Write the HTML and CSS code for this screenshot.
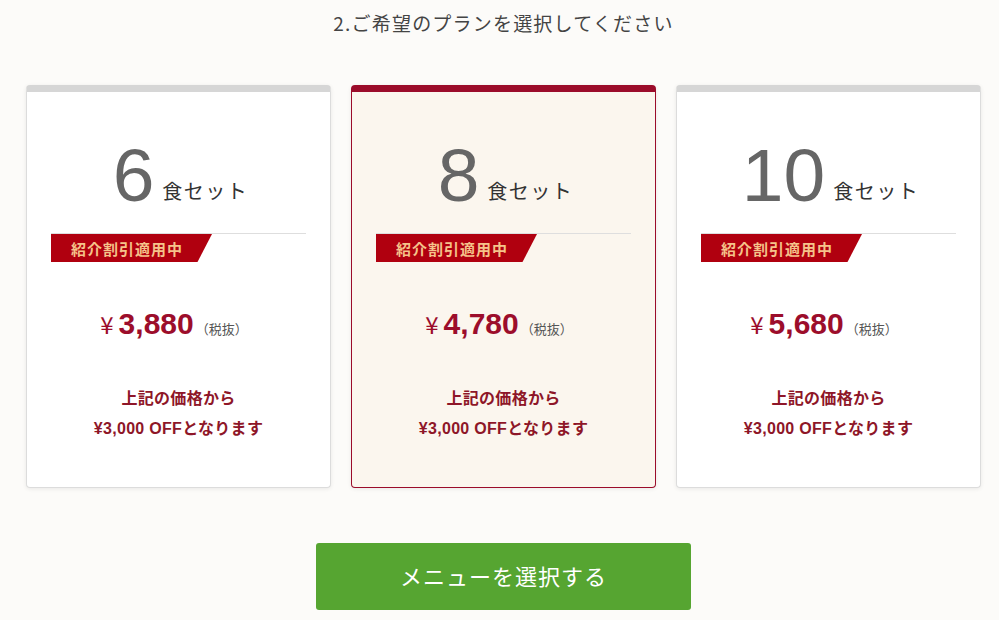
FILE: index.html
```html
<!DOCTYPE html>
<html lang="ja">
<head>
<meta charset="utf-8">
<link rel="stylesheet" href="styles.css">
</head>
<body>
<div class="wrap">
  <h2 class="title">2.ご希望のプランを選択してください</h2>
  <div class="plans">
    <div class="card">
      <div class="qty"><span class="num">6</span><span class="unit">食セット</span></div>
      <div class="badge-row"><span class="badge">紹介割引適用中</span></div>
      <div class="price"><span class="yen">¥</span><span class="amount">3,880</span><span class="tax">（税抜）</span></div>
      <p class="note">上記の価格から<br>¥3,000 OFFとなります</p>
    </div>
    <div class="card selected">
      <div class="qty"><span class="num">8</span><span class="unit">食セット</span></div>
      <div class="badge-row"><span class="badge">紹介割引適用中</span></div>
      <div class="price"><span class="yen">¥</span><span class="amount">4,780</span><span class="tax">（税抜）</span></div>
      <p class="note">上記の価格から<br>¥3,000 OFFとなります</p>
    </div>
    <div class="card">
      <div class="qty"><span class="num">10</span><span class="unit">食セット</span></div>
      <div class="badge-row"><span class="badge">紹介割引適用中</span></div>
      <div class="price"><span class="yen">¥</span><span class="amount">5,680</span><span class="tax">（税抜）</span></div>
      <p class="note">上記の価格から<br>¥3,000 OFFとなります</p>
    </div>
  </div>
  <div class="actions"><button class="btn">メニューを選択する</button></div>
</div>
</body>
</html>
```
FILE: styles.css
```css
* { box-sizing: border-box; }
html, body { margin: 0; padding: 0; }
body {
  background: #fcfbf9;
  font-family: "Liberation Sans", "Noto Sans CJK JP", sans-serif;
  color: #333;
}
.wrap {
  width: 955px;
  margin-left: 26px;
  padding-top: 11px;
}
.title {
  margin: 0;
  text-align: center;
  font-family: "Noto Sans CJK JP", sans-serif;
  font-weight: 400;
  font-size: 19px;
  line-height: 24px;
  letter-spacing: 1.2px;
  color: #444;
}
.plans {
  margin-top: 50px;
  display: grid;
  grid-template-columns: repeat(3, 1fr);
  gap: 20px;
}
.card {
  background: #fff;
  border: 1px solid #dcdcdc;
  border-top: 7px solid #d6d6d6;
  border-radius: 4px;
  box-shadow: 0 1px 4px rgba(0,0,0,0.08);
  padding: 46px 24px 0;
  height: 403px;
}
.card.selected {
  background: #fbf6ee;
  border-color: #9b0c2a;
}
.qty {
  display: flex;
  justify-content: center;
  align-items: baseline;
  height: 75px;
  padding-left: 4px;
}
.num {
  font-family: "Liberation Sans", Arial, sans-serif;
  font-size: 75px;
  line-height: 75px;
  color: #666;
}
.unit {
  margin-left: 8px;
  font-family: "Noto Sans CJK JP", sans-serif;
  font-size: 20px;
  letter-spacing: 1.5px;
  color: #333;
  position: relative;
  top: -2px;
}
.badge-row {
  margin-top: 20px;
  border-top: 1px solid #dedede;
  height: 29px;
}
.badge {
  display: flex;
  align-items: center;
  width: 161px;
  height: 28px;
  padding-left: 20px;
  background: #b0000f;
  clip-path: polygon(0 0, 100% 0, 91% 100%, 0 100%);
  color: #f5c38a;
  font-family: "Noto Sans CJK JP", sans-serif;
  font-weight: 700;
  font-size: 15px;
  letter-spacing: 1px;
}
.price {
  margin-top: 44px;
  display: flex;
  justify-content: center;
  align-items: baseline;
  color: #9c0d2b;
  padding-right: 9px;
}
.yen {
  font-family: "Noto Sans CJK JP", sans-serif;
  font-size: 24px;
  margin-right: 5px;
}
.amount {
  font-size: 30px;
  font-weight: 700;
  line-height: 36px;
}
.tax {
  margin-left: 2px;
  font-family: "Noto Sans CJK JP", sans-serif;
  font-size: 13px;
  color: #555;
}
.note {
  margin: 42px 0 0;
  text-align: center;
  font-weight: 700;
  font-size: 16px;
  line-height: 30px;
  letter-spacing: 0.3px;
  color: #8e1628;
}
.actions {
  display: flex;
  justify-content: center;
  margin-top: 55px;
}
.btn {
  width: 375px;
  height: 67px;
  border: 0;
  border-radius: 3px;
  background: #56a531;
  color: #fff;
  font-family: "Noto Sans CJK JP", sans-serif;
  font-size: 22px;
  letter-spacing: 1px;
  padding: 0 0 3px;
}
```
